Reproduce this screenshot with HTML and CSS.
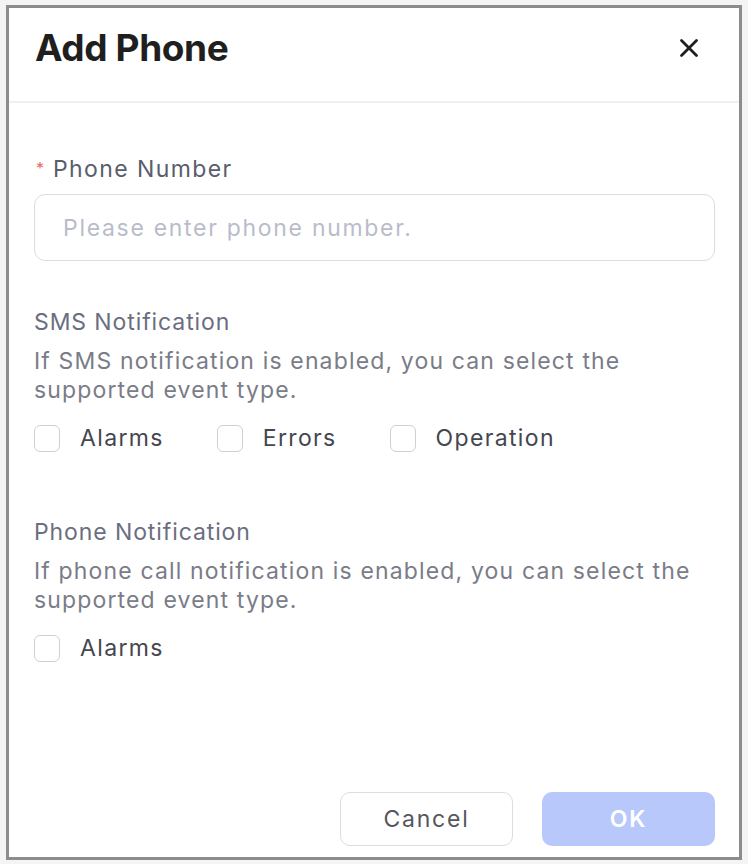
FILE: index.html
```html
<!DOCTYPE html>
<html lang="en">
<head>
  <meta charset="UTF-8" />
  <meta name="viewport" content="width=device-width, initial-scale=1.0" />
  <title>Add Phone</title>
  <link rel="stylesheet" href="styles.css">
</head>
<body>
  <div class="dialog">
    <div class="dialog-header">
      <h1>Add Phone</h1>
      <button class="btn-close" aria-label="Close">
        <svg width="22" height="22" viewBox="0 0 22 22">
          <path d="M3.5 3.5 L18.5 18.5 M18.5 3.5 L3.5 18.5" stroke="#1e1e1e" stroke-width="2.8" stroke-linecap="round" fill="none" />
        </svg>
      </button>
    </div>

    <div class="dialog-body">
      <label class="field-label" for="phone"><span class="required">*</span>Phone Number</label>
      <input type="text" id="phone" placeholder="Please enter phone number." />

      <div class="section section-sms">
        <div class="section-title">SMS Notification</div>
        <p class="section-desc">If SMS notification is enabled, you can select the supported event type.</p>
        <div class="checks">
          <label class="check"><span class="box"></span>Alarms</label>
          <label class="check"><span class="box"></span>Errors</label>
          <label class="check"><span class="box"></span>Operation</label>
        </div>
      </div>

      <div class="section section-phone">
        <div class="section-title">Phone Notification</div>
        <p class="section-desc">If phone call notification is enabled, you can select the supported event type.</p>
        <div class="checks">
          <label class="check"><span class="box"></span>Alarms</label>
        </div>
      </div>
    </div>

    <div class="dialog-footer">
      <button class="btn btn-cancel">Cancel</button>
      <button class="btn btn-ok">OK</button>
    </div>
  </div>
</body>
</html>
```

FILE: styles.css
```css
body {
  margin: 0;
  background: #f4f4f4;
  font-family: 'Inter', 'Liberation Sans', sans-serif;
}

.dialog {
  margin: 5px 6px 4px 6px;
  height: 855px;
  box-sizing: border-box;
  border: 3px solid #8c8c8c;
  background: white;
  display: flex;
  flex-direction: column;
}

.dialog-header {
  height: 95px;
  box-sizing: border-box;
  border-bottom: 2px solid #f0f0f2;
  display: flex;
  align-items: center;
  justify-content: space-between;
  padding: 0 39px 14px 26px;
}

h1 {
  margin: 0;
  font-size: 37px;
  line-height: 1;
  font-weight: 700;
  color: #1f1f1f;
  letter-spacing: -0.4px;
}

.btn-close {
  background: none;
  border: none;
  padding: 0;
  width: 22px;
  height: 22px;
  display: flex;
  align-items: center;
  justify-content: center;
  cursor: pointer;
}

.dialog-body {
  flex: 1;
  padding: 50px 24px 0 25px;
}

.field-label {
  display: block;
  font-size: 23px;
  line-height: 30px;
  letter-spacing: 1.4px;
  color: #5a5d6b;
}

.required {
  display: inline-block;
  color: #e86a6a;
  font-size: 16px;
  vertical-align: 3px;
  letter-spacing: 0;
  margin: 0 9px 0 2px;
}

input {
  display: block;
  width: 100%;
  box-sizing: border-box;
  height: 67px;
  margin-top: 10px;
  padding: 0 28px;
  border: 1.5px solid #dcdde2;
  border-radius: 11px;
  font-family: inherit;
  font-size: 23px;
  letter-spacing: 1.7px;
  color: #333;
}

input::placeholder {
  color: #b9bccb;
}

.section-sms {
  margin-top: 46px;
}

.section-phone {
  margin-top: 64px;
}

.section-title {
  font-size: 23px;
  line-height: 30px;
  letter-spacing: 0.9px;
  color: #6b6e80;
}

.section-desc {
  margin: 10px 0 0 0;
  font-size: 23px;
  line-height: 29px;
  letter-spacing: 1.15px;
  color: #7a7c88;
}

.checks {
  display: flex;
  margin-top: 18px;
  height: 30px;
  align-items: center;
}

.check {
  display: flex;
  align-items: center;
  font-size: 23px;
  letter-spacing: 1.35px;
  color: #444650;
  margin-right: 53px;
}

.box {
  width: 24px;
  height: 25px;
  border: 1.5px solid #cfd0d6;
  border-radius: 6px;
  margin-right: 20px;
}

.dialog-footer {
  display: flex;
  justify-content: flex-end;
  gap: 29px;
  padding: 0 24px 11px 0;
}

.btn {
  width: 173px;
  height: 54px;
  border-radius: 10px;
  font-family: inherit;
  font-size: 23px;
  letter-spacing: 1.8px;
  cursor: pointer;
}

.btn-cancel {
  background: white;
  border: 1.5px solid #dcdde2;
  color: #55575f;
}

.btn-ok {
  background: #b8c8fb;
  border: none;
  color: white;
  font-weight: 600;
}
```
